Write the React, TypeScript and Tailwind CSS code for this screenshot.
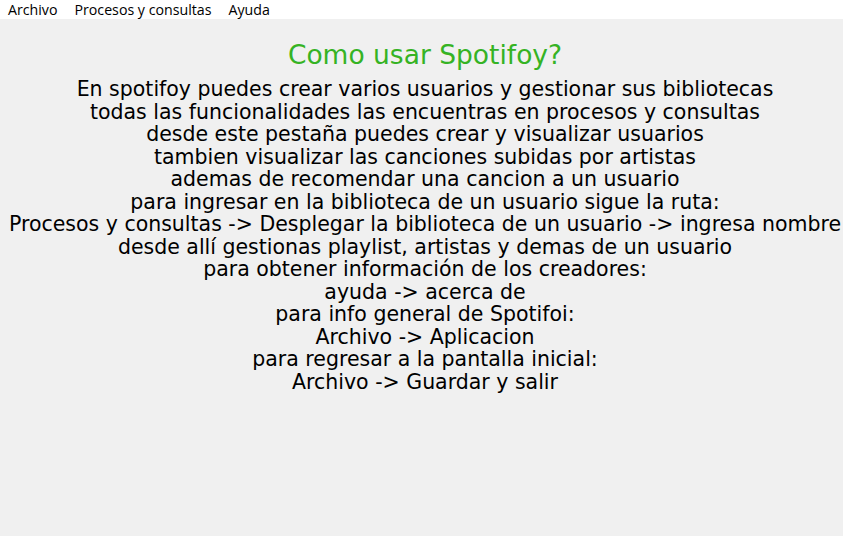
import React from "react";

const lines = [
  "En spotifoy puedes crear varios usuarios y gestionar sus bibliotecas",
  "todas las funcionalidades las encuentras en procesos y consultas",
  "desde este pestaña puedes crear y visualizar usuarios",
  "tambien visualizar las canciones subidas por artistas",
  "ademas de recomendar una cancion a un usuario",
  "para ingresar en la biblioteca de un usuario sigue la ruta:",
  "Procesos y consultas -> Desplegar la biblioteca de un usuario -> ingresa nombre",
  "desde allí gestionas playlist, artistas y demas de un usuario",
  "para obtener información de los creadores:",
  "ayuda -> acerca de",
  "para info general de Spotifoi:",
  "Archivo -> Aplicacion",
  "para regresar a la pantalla inicial:",
  "Archivo -> Guardar y salir",
];

export default function App() {
  return (
    <div className="w-[843px] h-[536px] bg-[#f0f0f0] flex flex-col overflow-hidden">
      <div className="h-[19px] bg-white flex items-center gap-[17px] pl-[8px] text-[14.2px] leading-[19px] text-black font-['Open_Sans','Noto_Sans',sans-serif]">
        <span>Archivo</span>
        <span>Procesos y consultas</span>
        <span>Ayuda</span>
      </div>
      <div className="flex flex-col items-center pt-[21px] pl-[7px] font-['DejaVu_Sans',sans-serif]">
        <div className="text-[#35b324] text-[26.5px] leading-[30px]">Como usar Spotifoy?</div>
        <div className="flex flex-col items-center text-black text-[20.5px] leading-[22.5px] mt-[8px]">
          {lines.map((l, i) => (
            <div key={i} className="whitespace-pre">{l}</div>
          ))}
        </div>
      </div>
    </div>
  );
}
